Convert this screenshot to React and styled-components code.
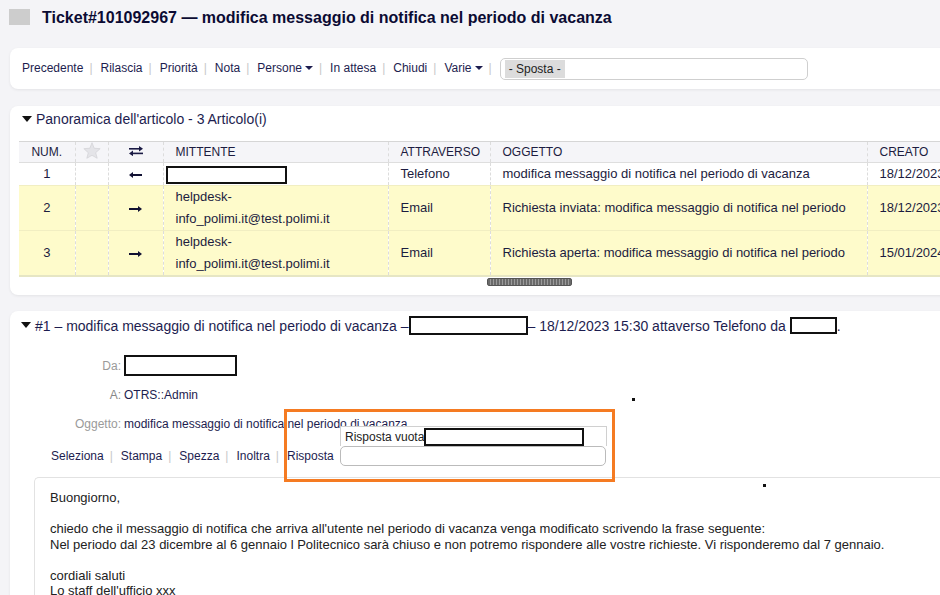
import styled, { createGlobalStyle } from "styled-components";

const GlobalStyle = createGlobalStyle`
  body {
    margin: 0;
    background: #f4f4f7;
    font-family: "Liberation Sans", Arial, sans-serif;
    overflow: hidden;
  }
`;

const Page = styled.div`
  width: 1180px;
  padding-left: 10px;
`;

const TitleRow = styled.div`
  height: 35px;
  display: flex;
  align-items: center;
  gap: 12px;
  margin-left: -1px;
`;

const TitleIcon = styled.div`
  width: 21px;
  height: 16px;
  background: #cdcdcd;
  margin-top: -1px;
`;

const Title = styled.h1`
  margin: 0;
  font-size: 16px;
  font-weight: bold;
  color: #0b0b33;
`;

const Card = styled.div`
  background: #fff;
  border-radius: 8px 0 0 8px;
  box-shadow: 0 1px 3px rgba(0, 0, 0, 0.07);
  margin-top: ${(p) => p.$gap}px;
`;

const ActionBar = styled(Card)`
  height: 41px;
  display: flex;
  align-items: center;
  padding-left: 12px;
  padding-bottom: 2px;
  box-sizing: border-box;
`;

const LinkList = styled.div`
  display: flex;
  align-items: center;
  font-size: 12px;
  color: #1d1d4f;
  padding-left: ${(p) => p.$indent || 0}px;
  height: ${(p) => p.$height || "auto"};
`;

const Link = styled.span`
  white-space: nowrap;
  display: inline-flex;
  align-items: center;
`;

const Sep = styled.span`
  color: #c8c8c8;
  margin: 0 8px 0 6px;
`;

const Caret = styled.span`
  display: inline-block;
  margin-left: 3px;
  border-left: 4px solid transparent;
  border-right: 4px solid transparent;
  border-top: 4px solid #1d1d4f;
`;

const SelectBox = styled.div`
  width: 308px;
  height: 22px;
  box-sizing: border-box;
  border: 1px solid #cfcfcf;
  border-radius: 5px;
  display: flex;
  align-items: center;
  padding-left: 4px;
  margin-top: 2px;
`;

const Chip = styled.span`
  background: #dcdcdc;
  padding: 2px 4px;
  font-size: 12px;
  color: #222;
`;

const PanelHeader = styled.div`
  display: flex;
  align-items: center;
  font-size: 14px;
  color: #1d1d4f;
  height: ${(p) => p.$height}px;
  margin-bottom: ${(p) => p.$after || 0}px;
  padding-left: ${(p) => p.$indent}px;
  white-space: nowrap;
`;

const Toggle = () => (
  <svg width="10" height="7" viewBox="0 0 10 7" style={{ marginRight: 4 }}>
    <polygon points="0,0 10,0 5,6" fill="#111" />
  </svg>
);

const Overview = styled(Card)`
  height: 189px;
  box-sizing: border-box;
  padding: 0 0 0 9px;
`;

const Table = styled.table`
  border-collapse: collapse;
  font-size: 13px;
  color: #1c1c40;
  table-layout: fixed;
  width: 1100px;
  border-top: 1px solid #d6d6d6;
  border-bottom: 2px solid #e6e6c4;
`;

const Th = styled.th`
  background: #f5f5f8;
  font-weight: normal;
  font-size: 12px;
  text-align: ${(p) => (p.$center ? "center" : "left")};
  padding: 0 0 0 ${(p) => (p.$center ? 0 : 12)}px;
  height: 18px;
  border-left: 1px dashed #dcdcdc;
  border-bottom: 1px solid #dedede;
  color: #1c1c40;
  &:first-child {
    border-left: none;
  }
`;

const Row = styled.tr`
  background: ${(p) => (p.$highlight ? "#fefbcb" : "#fff")};
  border-top: 1px solid ${(p) => (p.$highlight ? "#f1eec2" : "#eee")};
`;

const Td = styled.td`
  line-height: 22px;
  padding: 0 12px;
  text-align: ${(p) => (p.$center ? "center" : "left")};
  border-left: 1px dashed #dcdcdc;
  vertical-align: middle;
  white-space: ${(p) => (p.$nowrap ? "nowrap" : "normal")};
  overflow: hidden;
  &:first-child {
    border-left: none;
  }
`;

const Redact = styled.span`
  display: inline-block;
  box-sizing: border-box;
  border: 2px solid #111;
  background: #fff;
  width: ${(p) => p.$w}px;
  height: ${(p) => p.$h}px;
  vertical-align: middle;
`;

const Scrollbar = styled.div`
  height: 9px;
  margin-top: 1px;
  padding-left: 468px;
`;

const Thumb = styled.div`
  width: 85px;
  height: 8px;
  border-radius: 2px;
  background: repeating-linear-gradient(
    90deg,
    #6a6a6a 0,
    #6a6a6a 2px,
    #9a9a9a 2px,
    #9a9a9a 3px
  );
  border: 1px solid #555;
  box-sizing: border-box;
`;

const ArticleCard = styled(Card)`
  position: relative;
  height: 320px;
`;

const Fields = styled.div`
  display: grid;
  grid-template-columns: 111px 1fr;
  column-gap: 3px;
  grid-auto-rows: 29px;
  margin-top: 11px;
  font-size: 12px;
  align-items: center;
`;

const Label = styled.span`
  text-align: right;
  color: ${(p) => p.$tone || "#9a9a9a"};
`;

const Value = styled.span`
  color: #1d1d4f;
  white-space: nowrap;
`;

const ActionRow = styled(LinkList)`
  margin-top: 8px;
`;

const ReplyWrap = styled.span`
  position: relative;
  display: inline-flex;
  align-items: center;
  gap: 6px;
`;

const ReplySelect = styled.div`
  width: 266px;
  height: 20px;
  box-sizing: border-box;
  border: 1px solid #bbb;
  border-radius: 5px;
  background: #fff;
`;

const DropList = styled.div`
  position: absolute;
  left: 53px;
  top: -20px;
  width: 267px;
  height: 20px;
  box-sizing: border-box;
  background: #fff;
  border: 1px solid #d0d0d0;
  border-bottom: none;
  display: flex;
  align-items: center;
  padding-left: 4px;
  font-size: 12px;
  color: #222;
`;

const Highlight = styled.div`
  position: absolute;
  left: -3px;
  top: -37px;
  width: 331px;
  height: 73px;
  box-sizing: border-box;
  border: 3px solid #f57b22;
  pointer-events: none;
`;

const Dot = styled.div`
  position: absolute;
  width: 3px;
  height: 3px;
  background: #111;
  left: ${(p) => p.$x}px;
  top: ${(p) => p.$y}px;
`;

const Body = styled.div`
  margin: 11px 0 0 24px;
  border: 1px solid #e2e2e2;
  border-right: none;
  border-radius: 5px 0 0 0;
  padding: 12px 15px;
  font-size: 13px;
  line-height: 15.5px;
  color: #222;
  white-space: pre-line;
  height: 200px;
`;

const Arrow = ({ dir }) => (
  <svg width="13" height="6" viewBox="0 0 13 6">
    {dir === "left" ? (
      <>
        <rect x="3" y="2" width="10" height="2" fill="#111133" />
        <polygon points="0,3 4,0 4,6" fill="#111133" />
      </>
    ) : (
      <>
        <rect x="0" y="2" width="10" height="2" fill="#111133" />
        <polygon points="13,3 9,0 9,6" fill="#111133" />
      </>
    )}
  </svg>
);

const BothArrows = () => (
  <svg width="14" height="10" viewBox="0 0 14 10">
    <rect x="0" y="2" width="11" height="1.6" fill="#1a1a44" />
    <polygon points="14,2.8 10,0 10,5.6" fill="#1a1a44" />
    <rect x="3" y="6.6" width="11" height="1.6" fill="#1a1a44" />
    <polygon points="0,7.4 4,4.6 4,10.2" fill="#1a1a44" />
  </svg>
);

const Star = () => (
  <svg width="18" height="17" viewBox="0 0 24 23">
    <polygon
      points="12,1 15,8.5 23,9 17,14.5 19,22 12,18 5,22 7,14.5 1,9 9,8.5"
      fill="#e4e4e8"
      stroke="#d2d2d6"
      strokeWidth="1"
    />
  </svg>
);

const articles = [
  { num: 1, dir: "left", via: "Telefono", subject: "modifica messaggio di notifica nel periodo di vacanza", created: "18/12/2023 15:30" },
  { num: 2, dir: "right", sender: "helpdesk-info_polimi.it@test.polimi.it", via: "Email", subject: "Richiesta inviata: modifica messaggio di notifica nel periodo", created: "18/12/2023 15:31", highlight: true },
  { num: 3, dir: "right", sender: "helpdesk-info_polimi.it@test.polimi.it", via: "Email", subject: "Richiesta aperta: modifica messaggio di notifica nel periodo", created: "15/01/2024 09:12", highlight: true },
];

const topActions = ["Precedente", "Rilascia", "Priorità", "Nota", "Persone", "In attesa", "Chiudi", "Varie"];
const withCaret = ["Persone", "Varie"];

export default function App() {
  return (
    <>
      <GlobalStyle />
      <Page>
        <TitleRow>
          <TitleIcon />
          <Title>Ticket#101092967 — modifica messaggio di notifica nel periodo di vacanza</Title>
        </TitleRow>

        <ActionBar $gap={13}>
          <LinkList>
            {topActions.map((a) => (
              <Link key={a}>
                {a}
                {withCaret.includes(a) && <Caret />}
                <Sep>|</Sep>
              </Link>
            ))}
            <SelectBox>
              <Chip>- Sposta -</Chip>
            </SelectBox>
          </LinkList>
        </ActionBar>

        <Overview $gap={17}>
          <PanelHeader $height={26} $after={9} $indent={3}>
            <Toggle />
            Panoramica dell'articolo - 3 Articolo(i)
          </PanelHeader>
          <Table>
            <colgroup>
              <col style={{ width: 56 }} />
              <col style={{ width: 33 }} />
              <col style={{ width: 55 }} />
              <col style={{ width: 225 }} />
              <col style={{ width: 102 }} />
              <col style={{ width: 377 }} />
              <col style={{ width: 252 }} />
            </colgroup>
            <thead>
              <tr>
                <Th $center>NUM.</Th>
                <Th $center><Star /></Th>
                <Th $center><BothArrows /></Th>
                <Th>MITTENTE</Th>
                <Th>ATTRAVERSO</Th>
                <Th>OGGETTO</Th>
                <Th>CREATO</Th>
              </tr>
            </thead>
            <tbody>
              {articles.map((r) => (
                <Row key={r.num} $highlight={r.highlight}>
                  <Td $center>{r.num}</Td>
                  <Td />
                  <Td $center><Arrow dir={r.dir} /></Td>
                  <Td style={{ paddingLeft: r.sender ? 12 : 2 }}>
                    {r.sender ? r.sender : <Redact $w={121} $h={18} />}
                  </Td>
                  <Td>{r.via}</Td>
                  <Td $nowrap>{r.subject}</Td>
                  <Td $nowrap>{r.created}</Td>
                </Row>
              ))}
            </tbody>
          </Table>
          <Scrollbar>
            <Thumb />
          </Scrollbar>
        </Overview>

        <ArticleCard $gap={16}>
          <PanelHeader $height={29} $indent={11}>
            <Toggle />
            #1 – modifica messaggio di notifica nel periodo di vacanza –
            <Redact $w={119} $h={19} />
            – 18/12/2023 15:30 attaverso Telefono da&nbsp;
            <Redact $w={47} $h={17} />
            .
          </PanelHeader>

          <Fields>
            <Label>Da:</Label>
            <Value><Redact $w={113} $h={21} /></Value>
            <Label $tone="#888">A:</Label>
            <Value>OTRS::Admin</Value>
            <Label>Oggetto:</Label>
            <Value>modifica messaggio di notifica nel periodo di vacanza</Value>
          </Fields>

          <ActionRow $indent={41} $height="20px">
            {["Seleziona", "Stampa", "Spezza", "Inoltra"].map((a) => (
              <Link key={a}>
                {a}
                <Sep>|</Sep>
              </Link>
            ))}
            <ReplyWrap>
              Risposta
              <ReplySelect />
              <DropList>
                Risposta vuota
                <Redact $w={160} $h={18} />
              </DropList>
              <Highlight />
            </ReplyWrap>
          </ActionRow>

          <Body>
            {`Buongiorno,

chiedo che il messaggio di notifica che arriva all'utente nel periodo di vacanza venga modificato scrivendo la frase seguente:
Nel periodo dal 23 dicembre al 6 gennaio l Politecnico sarà chiuso e non potremo rispondere alle vostre richieste. Vi risponderemo dal 7 gennaio.

cordiali saluti
Lo staff dell'ufficio xxx`}
          </Body>

          <Dot $x={622} $y={87} />
          <Dot $x={753} $y={173} />
        </ArticleCard>
      </Page>
    </>
  );
}
